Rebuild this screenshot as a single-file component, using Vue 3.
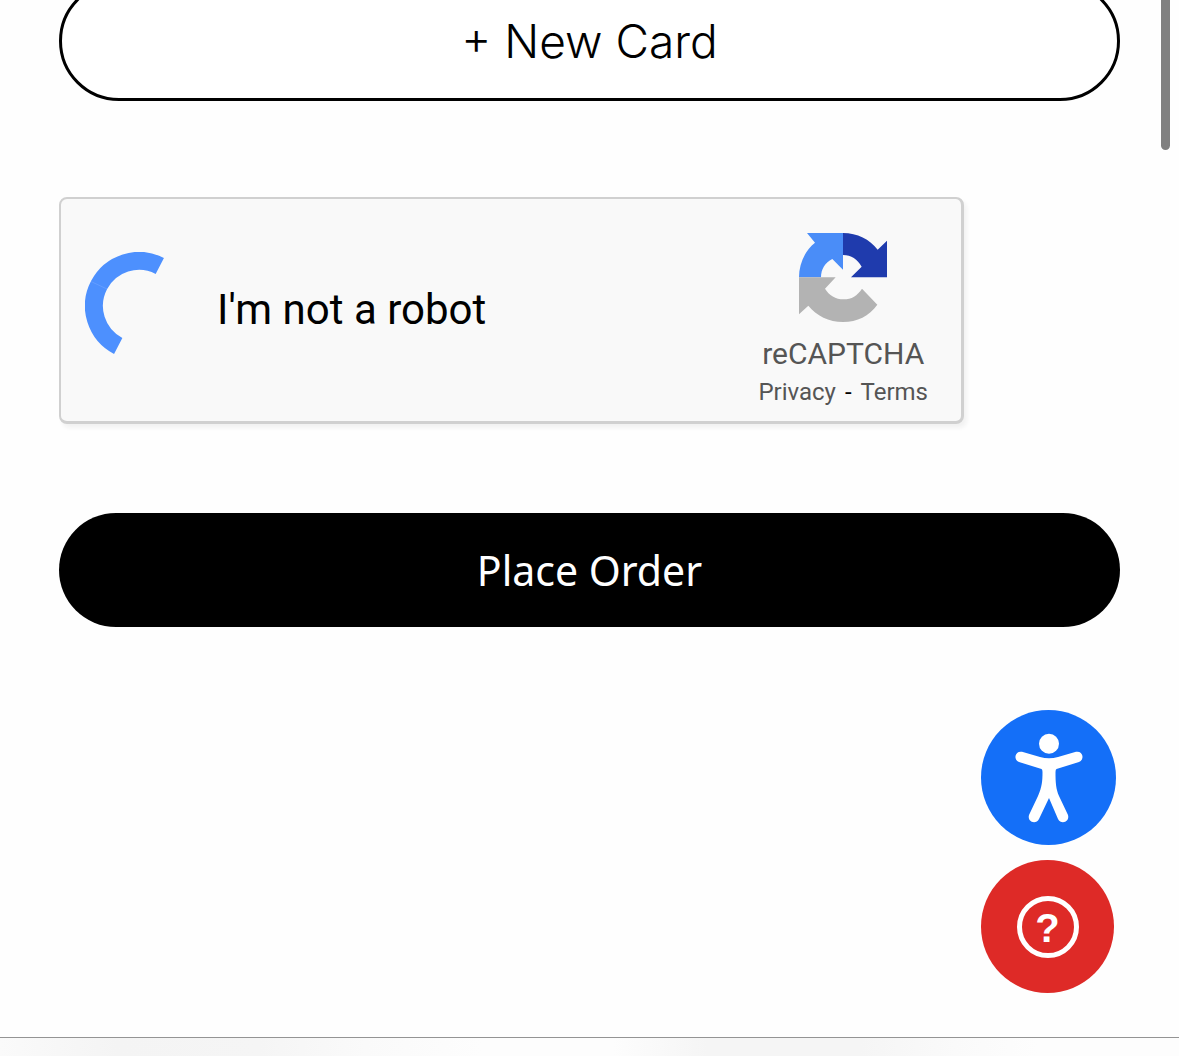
<script setup>
import { ref } from 'vue'

const loading = ref(true)
</script>

<template>
  <div class="page">
    <main class="checkout">
      <button type="button" class="pill outline">+ New Card</button>

      <section class="captcha" aria-label="reCAPTCHA">
        <div class="check" :aria-busy="loading">
          <svg class="spinner" viewBox="0 0 108 116" aria-hidden="true">
            <path d="M74.8 14A45 45 0 0 0 33.2 94" fill="none" stroke="#4d90fe" stroke-width="18" />
            <path d="M6 29.500L22 37" stroke="#689fff" stroke-width="0.800" />
          </svg>
          <span class="prompt">I'm not a robot</span>
        </div>
        <div class="brand">
          <svg class="logo" viewBox="177 126 270 276" aria-hidden="true">
            <path fill="#4a8df8" d="M204 129H312V239L280 207C258 218 246 238 246 262H180C180 222 198 181 228 158Z" />
            <path fill="#1f3bad" d="M312 129C355 129 392 148 416 179L444 152V262H336L368 230C355 208 337 195 312 195Z" />
            <path fill="#b3b3b3" d="M180 262H290L258 296C270 316 290 328 314 328C338 328 355 317 369 296L415 344C390 378 355 396 312 396C270 396 232 377 208 347L180 373Z" />
          </svg>
          <span class="name">reCAPTCHA</span>
          <span class="legal"><a href="#privacy">Privacy</a><span>-</span><a href="#terms">Terms</a></span>
        </div>
      </section>

      <button type="button" class="pill solid">Place Order</button>
    </main>

    <footer class="toolbar"></footer>

    <div class="scroll-thumb"></div>
    <div class="floating">
      <button type="button" class="round access" aria-label="Accessibility options">
        <svg viewBox="0 0 135 135" aria-hidden="true">
          <circle cx="68" cy="33.700" r="10" />
          <path d="M41 41.800L59 47Q68 49.500 77 47L95 41.800C102 40.500 104 49.500 98 52L75.500 59Q74.500 59.500 74.500 62C74.500 73 75 79 78 86L87 105C89 112 80 115 77 109L68 88L58 109C55 115 46 112 48 105L57 86C61 77 61.500 71 61.500 62Q61.500 59.500 60.500 59L38 52C32 49.500 34 40.500 41 41.800Z" />
        </svg>
      </button>
      <button type="button" class="round help" aria-label="Help"><span class="ring">?</span></button>
    </div>
  </div>
</template>

<style>
body {
  margin: 0;
  background: #fefefe;
}
</style>

<style scoped>
.page {
  display: flex;
  flex-direction: column;
  min-height: 100vh;
  box-sizing: border-box;
  position: relative;
  overflow: hidden;
  font-family: Roboto, "Liberation Sans", sans-serif;
}

.checkout {
  display: flex;
  flex-direction: column;
  margin-top: -19px;
  padding: 0 59px;
}

button {
  margin: 0;
  padding: 0;
  border: 0;
  cursor: pointer;
}

.pill {
  width: 100%;
  border-radius: 60px;
}

.outline {
  height: 120px;
  border: 3px solid #000;
  background: #fff;
  color: #000;
  font: 360 46px/56px Inter, "Liberation Sans", sans-serif;
}

.solid {
  height: 114px;
  background: #000;
  color: #fff;
  font: 400 41px/56px "Noto Sans", "Open Sans", sans-serif;
}

.captcha {
  display: flex;
  align-items: center;
  justify-content: space-between;
  box-sizing: border-box;
  width: 100%;
  max-width: 905px;
  height: 227px;
  margin: 96px 0 89px;
  padding: 0 33px 0 24px;
  border: 2px solid #d0d0d0;
  border-right-width: 3px;
  border-bottom-width: 3px;
  border-radius: 8px;
  background: #f9f9f9;
  box-shadow: 3px 4px 4px #f2f2f2;
}

.check {
  display: flex;
  align-items: center;
  gap: 24px;
}

.spinner {
  width: 108px;
  height: 116px;
}

.prompt {
  font-size: 42px;
  line-height: 48px;
  color: #000;
}

.brand {
  display: flex;
  flex-direction: column;
  align-items: center;
  padding-top: 18px;
  color: #555;
}

.logo {
  width: 90px;
  height: 92px;
  margin-bottom: 12px;
}

.name {
  font-size: 30px;
  line-height: 36px;
}

.legal {
  display: flex;
  gap: 9px;
  margin-top: 6px;
  font-size: 24px;
  line-height: 28px;
  color: #000;
}

.legal a {
  color: #555;
  text-decoration: none;
}

.toolbar {
  height: 18px;
  margin-top: auto;
  border-top: 1px solid #949494;
  background: linear-gradient(90deg, #fafafa, #f4f4f4 10%, #f5f5f5 22%, #fafafa 31%, #fdfdfd 41%, #fdfdfd 52%, #f5f5f5 60%, #f5f5f5 73%, #fafafa 81%, #fdfdfd 88%);
}

.scroll-thumb {
  position: absolute;
  top: -10px;
  right: 9px;
  width: 9px;
  height: 160px;
  border-radius: 5px;
  background: #808080;
}

.floating {
  position: fixed;
  right: 63px;
  bottom: 63px;
  display: flex;
  flex-direction: column;
  gap: 15px;
}

.round {
  display: flex;
  align-items: center;
  justify-content: center;
  border-radius: 50%;
  color: #fff;
}

.access {
  width: 135px;
  height: 135px;
  background: #146ff8;
}

.access svg {
  width: 135px;
  height: 135px;
  fill: #fff;
}

.help {
  width: 133px;
  height: 133px;
  background: #de2a27;
}

.ring {
  box-sizing: border-box;
  width: 62px;
  height: 62px;
  border: 5px solid #fff;
  border-radius: 50%;
  font: 700 40px/54px "Liberation Sans", sans-serif;
}
</style>
